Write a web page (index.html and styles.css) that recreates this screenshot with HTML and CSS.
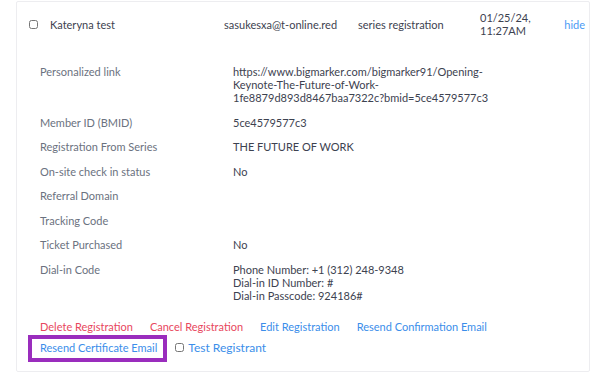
FILE: index.html
```html
<!DOCTYPE html>
<html lang="en">
<head>
    <meta charset="UTF-8">
    <title>Registrant</title>
    <link rel="stylesheet" href="styles.css">
</head>
<body>
    <!-- registrant card -->
    <div class="card">
        <!-- summary row -->
        <div class="summary">
            <input type="checkbox" class="check">
            <div class="name">Kateryna test</div>
            <div class="email">sasukesxa@t-online.red</div>
            <div class="kind">series registration</div>
            <div class="date">01/25/24,<br>11:27AM</div>
            <a class="hide-link" href="#">hide</a>
        </div>

        <!-- details -->
        <div class="details">
            <div class="label">Personalized link</div>
            <div class="value">https://www.bigmarker.com/bigmarker91/Opening-<br>Keynote-The-Future-of-Work-<br>1fe8879d893d8467baa7322c?bmid=5ce4579577c3</div>

            <div class="label">Member ID (BMID)</div>
            <div class="value">5ce4579577c3</div>

            <div class="label">Registration From Series</div>
            <div class="value">THE FUTURE OF WORK</div>

            <div class="label">On-site check in status</div>
            <div class="value">No</div>

            <div class="label">Referral Domain</div>
            <div class="value"></div>

            <div class="label">Tracking Code</div>
            <div class="value"></div>

            <div class="label">Ticket Purchased</div>
            <div class="value">No</div>

            <div class="label">Dial-in Code</div>
            <div class="value">Phone Number: +1 (312) 248-9348<br>Dial-in ID Number: #<br>Dial-in Passcode: 924186#</div>
        </div>

        <!-- actions -->
        <div class="actions">
            <a class="action danger" href="#">Delete Registration</a>
            <a class="action danger" href="#">Cancel Registration</a>
            <a class="action" href="#">Edit Registration</a>
            <a class="action" href="#">Resend Confirmation Email</a>
        </div>
        <div class="actions second">
            <a class="action marked" href="#">Resend Certificate Email</a>
            <label class="test-reg"><input type="checkbox" class="check small">Test Registrant</label>
        </div>
    </div>
</body>
</html>
```

FILE: styles.css
```css
body {
    margin: 0;
    font-family: Lato, "Liberation Sans", sans-serif;
    font-size: 11px;
    color: #3d4250;
    background: #fff;
}

a {
    text-decoration: none;
}

.card {
    margin: 1px 10px 0 16px;
    border: 1px solid #ededf0;
    border-radius: 2px;
    height: 371px;
    box-sizing: border-box;
}

/* summary row */
.summary {
    display: grid;
    grid-template-columns: 21px 174px 134px 122px 1fr auto;
    align-items: center;
    padding: 3px 4px 0 12px;
    height: 38px;
}

.check {
    margin: 0;
    width: 9px;
    height: 9px;
}

.date {
    line-height: 13px;
}

.hide-link {
    color: #4b9bf5;
}

/* detail table */
.details {
    display: grid;
    grid-template-columns: 193px 1fr;
    row-gap: 11.5px;
    padding: 22px 0 0 23px;
    line-height: 13px;
}

.label {
    color: #6b7280;
}

.value {
    min-height: 13px;
}

/* action links */
.actions {
    display: flex;
    gap: 17px;
    padding: 18px 0 0 23px;
    line-height: 14px;
}

.actions.second {
    padding-top: 7px;
    gap: 18px;
    align-items: center;
}

.action {
    color: #3b8eea;
}

.action.danger {
    color: #e8475e;
}

.marked {
    position: relative;
}

/* highlight frame around the certificate link */
.marked::after {
    content: "";
    position: absolute;
    left: -12px;
    right: -10px;
    top: -6px;
    bottom: -7px;
    border: 4px solid #9a2dbd;
}

.test-reg {
    display: flex;
    align-items: center;
    gap: 4px;
    color: #3b8eea;
    font-size: 12px;
}
```
